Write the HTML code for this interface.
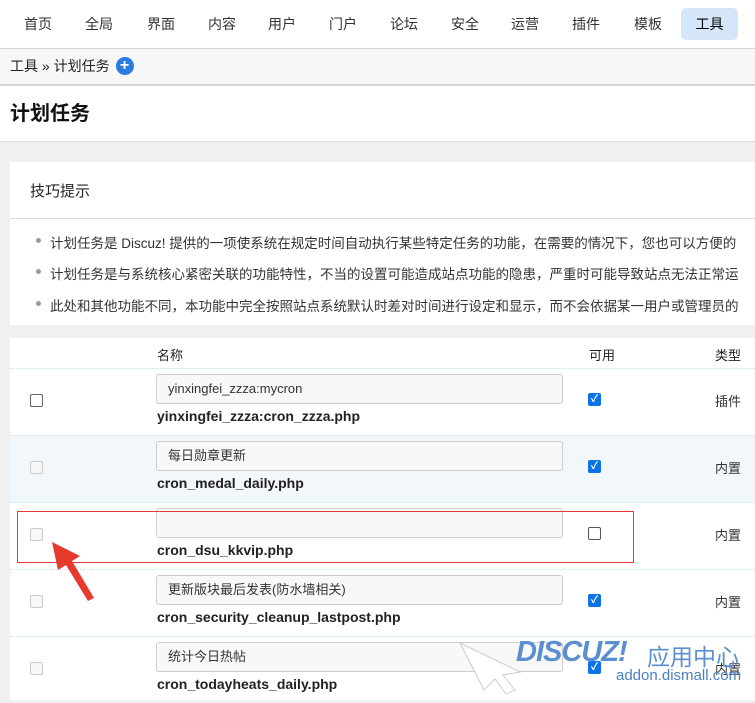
<!DOCTYPE html>
<html><head><meta charset="utf-8"><style>
*{margin:0;padding:0;box-sizing:border-box}
body{width:755px;height:700px;overflow:hidden;font-family:"Liberation Sans","Noto Sans CJK SC",sans-serif;font-size:13px;color:#333;background:#f0f0f0;position:relative}
.nav{position:absolute;left:0;top:0;width:755px;height:49px;background:#fff;border-bottom:1px solid #d5d5d5}
.nav span{position:absolute;top:8px;height:32px;line-height:32px;font-size:14px;color:#333;text-align:center}
.nav .on{background:#d5e6fa;border-radius:5px;width:57px;color:#000}
.bc{position:absolute;top:49px;left:0;width:755px;height:35px;background:#f7f7f7;box-shadow:0 2px 3px #ccc;font-size:14px;line-height:35px;padding-left:10px;color:#222}
.plus{display:inline-block;width:18px;height:18px;border-radius:50%;background:#2a7be0;color:#fff;font-weight:bold;text-align:center;line-height:18px;font-size:16px;vertical-align:middle;margin-left:6px;margin-top:-3px}
.head{position:absolute;top:86px;left:0;width:755px;height:56px;background:#fff;border-bottom:1px solid #e2e2e2}
.head h1{font-size:20px;position:absolute;left:10px;top:11px;color:#111}
.tips{position:absolute;left:10px;top:162px;width:745px;height:163px;background:#fff}
.tips .t{position:absolute;left:20px;top:18px;font-size:15px;color:#222}
.tips .line{position:absolute;top:56px;left:0;right:0;border-top:1px solid #ddd}
.tips p{position:absolute;left:40px;white-space:nowrap;font-size:13.5px;color:#333}
.tips p:before{content:"";position:absolute;left:-14px;top:6px;width:5px;height:5px;border-radius:50%;background:#999}
.tbl{position:absolute;left:10px;top:338px;width:745px;height:362px;background:#fff}
.th{position:absolute;top:7px;font-size:13px;color:#222}
.row{position:absolute;left:0;width:745px;height:67px;border-top:1px dotted #cfe0ec}
.cb{position:absolute;left:20px;width:13px;height:13px;border:1px solid #666;border-radius:2px;background:#fff}
.cb.d{border-color:#ccc;background:#f7f7f7}
.inp{position:absolute;left:146px;top:5px;width:407px;height:30px;border:1px solid #ccc;border-radius:3px;background:#f8f8f8;padding-left:11px;line-height:28px;font-size:13px;color:#333}
.fn{position:absolute;left:147px;top:39px;font-weight:bold;font-size:14px;color:#222}
.ck{position:absolute;left:578px;top:24px;width:13px;height:13px;border-radius:2px;background:#0b73e8;color:#fff;font-size:10px;line-height:13px;text-align:center;font-weight:bold}
.ck.e{background:#fff;border:1px solid #555}
.ty{position:absolute;left:705px;top:22px;font-size:13px;color:#333}
</style></head><body>
<div class="nav">
<span style="left:16px;width:44px">首页</span>
<span style="left:77px;width:44px">全局</span>
<span style="left:139px;width:44px">界面</span>
<span style="left:200px;width:44px">内容</span>
<span style="left:260px;width:44px">用户</span>
<span style="left:321px;width:44px">门户</span>
<span style="left:382px;width:44px">论坛</span>
<span style="left:443px;width:44px">安全</span>
<span style="left:503px;width:44px">运营</span>
<span style="left:564px;width:44px">插件</span>
<span style="left:626px;width:44px">模板</span>
<span class="on" style="left:681px">工具</span>
</div>
<div class="bc">工具 » 计划任务<span class="plus">+</span></div>
<div class="head"><h1>计划任务</h1></div>
<div class="tips">
<div class="t">技巧提示</div><div class="line"></div>
<p style="top:70px">计划任务是 Discuz! 提供的一项使系统在规定时间自动执行某些特定任务的功能，在需要的情况下，您也可以方便的</p>
<p style="top:101px">计划任务是与系统核心紧密关联的功能特性，不当的设置可能造成站点功能的隐患，严重时可能导致站点无法正常运</p>
<p style="top:133px">此处和其他功能不同，本功能中完全按照站点系统默认时差对时间进行设定和显示，而不会依据某一用户或管理员的</p>
</div>
<div class="tbl">
<div class="th" style="left:147px">名称</div><div class="th" style="left:579px">可用</div><div class="th" style="left:705px">类型</div>
<div class="row" style="top:30px"><div class="cb" style="top:25px"></div><div class="inp">yinxingfei_zzza:mycron</div><div class="fn">yinxingfei_zzza:cron_zzza.php</div><div class="ck">✓</div><div class="ty">插件</div></div>
<div class="row" style="top:97px;background:#f1f7fb"><div class="cb d" style="top:25px"></div><div class="inp">每日勋章更新</div><div class="fn">cron_medal_daily.php</div><div class="ck">✓</div><div class="ty">内置</div></div>
<div class="row" style="top:164px"><div class="cb d" style="top:25px"></div><div class="inp"></div><div class="fn">cron_dsu_kkvip.php</div><div class="ck e"></div><div class="ty">内置</div></div>
<div class="row" style="top:231px"><div class="cb d" style="top:25px"></div><div class="inp">更新版块最后发表(防水墙相关)</div><div class="fn">cron_security_cleanup_lastpost.php</div><div class="ck">✓</div><div class="ty">内置</div></div>
<div class="row" style="top:298px"><div class="cb d" style="top:25px"></div><div class="inp">统计今日热帖</div><div class="fn">cron_todayheats_daily.php</div><div class="ck">✓</div><div class="ty">内置</div></div>
</div>
<div style="position:absolute;left:17px;top:511px;width:617px;height:52px;border:1px solid #e53935"></div>
<svg style="position:absolute;left:0;top:0" width="755" height="700"><polygon points="52,542 80,556 72,561 94,598 88,601 66,565 58,570" fill="#e8392f"/>
<polygon points="460,643 520,672 503,675 515,690 506,694 495,679 484,690" fill="#fff" stroke="#ccc" stroke-width="1"/></svg>
<div style="position:absolute;left:516px;top:636px;font-style:italic;font-weight:bold;font-size:29px;color:#5b8fd0;letter-spacing:-1px">DISCUZ!</div>
<div style="position:absolute;left:647px;top:638px;font-size:23px;color:#5b8fd0">应用中心</div>
<div style="position:absolute;left:616px;top:667px;font-size:15px;color:#4a7fc0">addon.dismall.com</div>
</body></html>
